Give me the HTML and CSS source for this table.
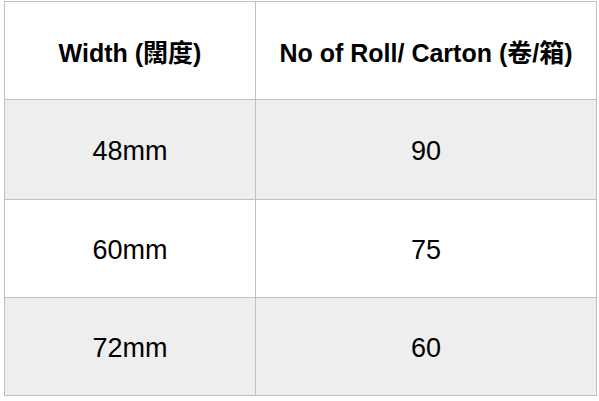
FILE: index.html
```html
<!DOCTYPE html>
<html>
<head>
<meta charset="utf-8">
<link rel="stylesheet" href="styles.css">
</head>
<body>
<table class="spec">
  <thead>
    <tr>
      <th class="col-width">Width (闊度)</th>
      <th class="col-qty">No of Roll/ Carton (卷/箱)</th>
    </tr>
  </thead>
  <tbody>
    <tr class="alt first"><td>48mm</td><td>90</td></tr>
    <tr><td>60mm</td><td>75</td></tr>
    <tr class="alt"><td>72mm</td><td>60</td></tr>
  </tbody>
</table>
</body>
</html>
```
FILE: styles.css
```css
html, body {
  margin: 0;
  padding: 0;
  background: #ffffff;
}
body {
  padding: 1px 0 0 4px;
  font-family: "Liberation Sans", Arial, "Noto Sans CJK TC", sans-serif;
  color: #000;
}
.spec {
  border-collapse: collapse;
  width: 591px;
  table-layout: fixed;
}
.spec th, .spec td {
  border: 1px solid #c0c0c0;
  text-align: center;
  vertical-align: middle;
  height: 97px;
  padding: 0;
}
.spec th {
  font-size: 25px;
  font-weight: bold;
}
.spec td {
  font-size: 27px;
  padding-top: 4px;
}
.spec .first td {
  height: 95px;
}
.spec tbody tr:not(.first) td {
  height: 93px;
}
.col-width { width: 250px; }
.col-qty { width: 340px; }
.alt td { background: #eeeeee; }
```
